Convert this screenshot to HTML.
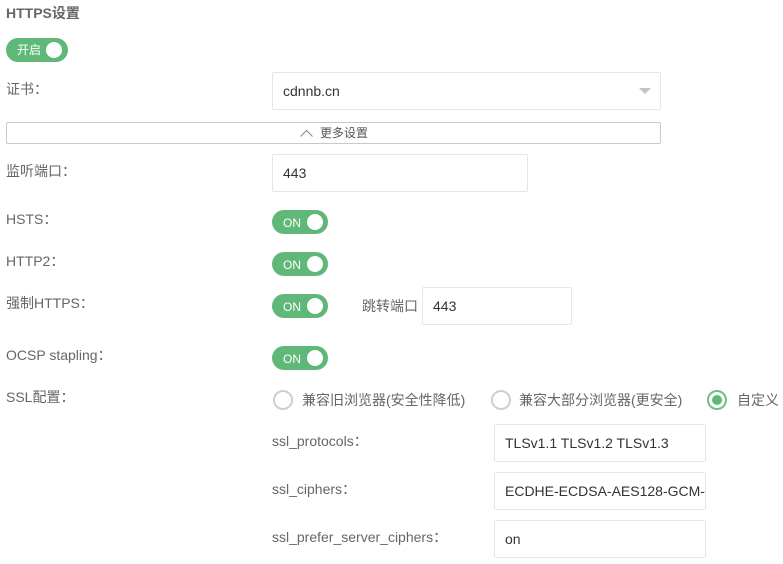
<!DOCTYPE html>
<html lang="zh"><head><meta charset="utf-8"><style>
html,body{margin:0;padding:0;background:#fff;width:783px;height:564px;overflow:hidden}
body{position:relative;font-family:"Liberation Sans","Noto Sans CJK SC",sans-serif;font-size:14px;color:#666}
.a{position:absolute;white-space:nowrap;line-height:20px}
.box{position:absolute;box-sizing:border-box;border:1px solid #e6e6e6;border-radius:2px;background:#fff;color:#333;padding-left:10px;line-height:36px;height:38px;overflow:hidden;white-space:nowrap}
.sw{position:absolute;left:272px;width:56px;height:24px;border-radius:12px;background:#5fb878;color:#fff;font-size:12px;line-height:24px}
.sw span{position:absolute;left:11px;top:1px}
.sw i{position:absolute;right:5px;top:4px;width:16px;height:16px;border-radius:50%;background:#fff}
.r{position:absolute;box-sizing:border-box;top:390px;width:20px;height:20px;border:2px solid #cfcfcf;border-radius:50%;background:#fff}
.r.on{border-color:#6fc088}
.r.on i{position:absolute;left:3px;top:3px;width:10px;height:10px;border-radius:50%;background:#5fb878}
</style></head><body>
<div class="a" style="left:6px;top:3px;font-weight:bold;color:#666;font-size:14px">HTTPS设置</div>
<div class="sw" style="left:6px;top:38px;width:62px"><span style="top:0">开启</span><i style="right:6px"></i></div>

<div class="a" style="left:6px;top:79px">证书：</div>
<div class="box" style="left:272px;top:72px;width:389px">cdnnb.cn</div>
<div style="position:absolute;left:639px;top:88px;width:0;height:0;border-left:6px solid transparent;border-right:6px solid transparent;border-top:6px solid #c2c2c2"></div>

<div style="position:absolute;left:6px;top:122px;width:655px;height:22px;box-sizing:border-box;border:1px solid #c8c8c8;border-radius:2px;background:#fff"></div>
<svg style="position:absolute;left:299px;top:128px" width="15" height="10" viewBox="0 0 15 10"><path d="M1.5 8.5 L7.5 2.5 L13.5 8.5" fill="none" stroke="#888" stroke-width="1"/></svg>
<div class="a" style="left:320px;top:123px;font-size:12px;color:#555">更多设置</div>

<div class="a" style="left:6px;top:161px">监听端口：</div>
<div class="box" style="left:272px;top:154px;width:256px">443</div>

<div class="a" style="left:6px;top:209px">HSTS：</div>
<div class="sw" style="top:210px"><span>ON</span><i></i></div>
<div class="a" style="left:6px;top:251px">HTTP2：</div>
<div class="sw" style="top:252px"><span>ON</span><i></i></div>
<div class="a" style="left:6px;top:293px">强制HTTPS：</div>
<div class="sw" style="top:294px"><span>ON</span><i></i></div>
<div class="a" style="left:362px;top:296px">跳转端口</div>
<div class="box" style="left:422px;top:287px;width:150px">443</div>
<div class="a" style="left:6px;top:345px">OCSP stapling：</div>
<div class="sw" style="top:346px"><span>ON</span><i></i></div>

<div class="a" style="left:6px;top:387px">SSL配置：</div>
<div class="r" style="left:273px"></div>
<div class="a" style="left:302px;top:390px">兼容旧浏览器(安全性降低)</div>
<div class="r" style="left:491px"></div>
<div class="a" style="left:519px;top:390px">兼容大部分浏览器(更安全)</div>
<div class="r on" style="left:707px"><i></i></div>
<div class="a" style="left:737px;top:390px">自定义</div>

<div class="a" style="left:272px;top:431px">ssl_protocols：</div>
<div class="box" style="left:494px;top:424px;width:212px">TLSv1.1 TLSv1.2 TLSv1.3</div>
<div class="a" style="left:272px;top:479px">ssl_ciphers：</div>
<div class="box" style="left:494px;top:472px;width:212px">ECDHE-ECDSA-AES128-GCM-SHA256</div>
<div class="a" style="left:272px;top:527px">ssl_prefer_server_ciphers：</div>
<div class="box" style="left:494px;top:520px;width:212px">on</div>
</body></html>
